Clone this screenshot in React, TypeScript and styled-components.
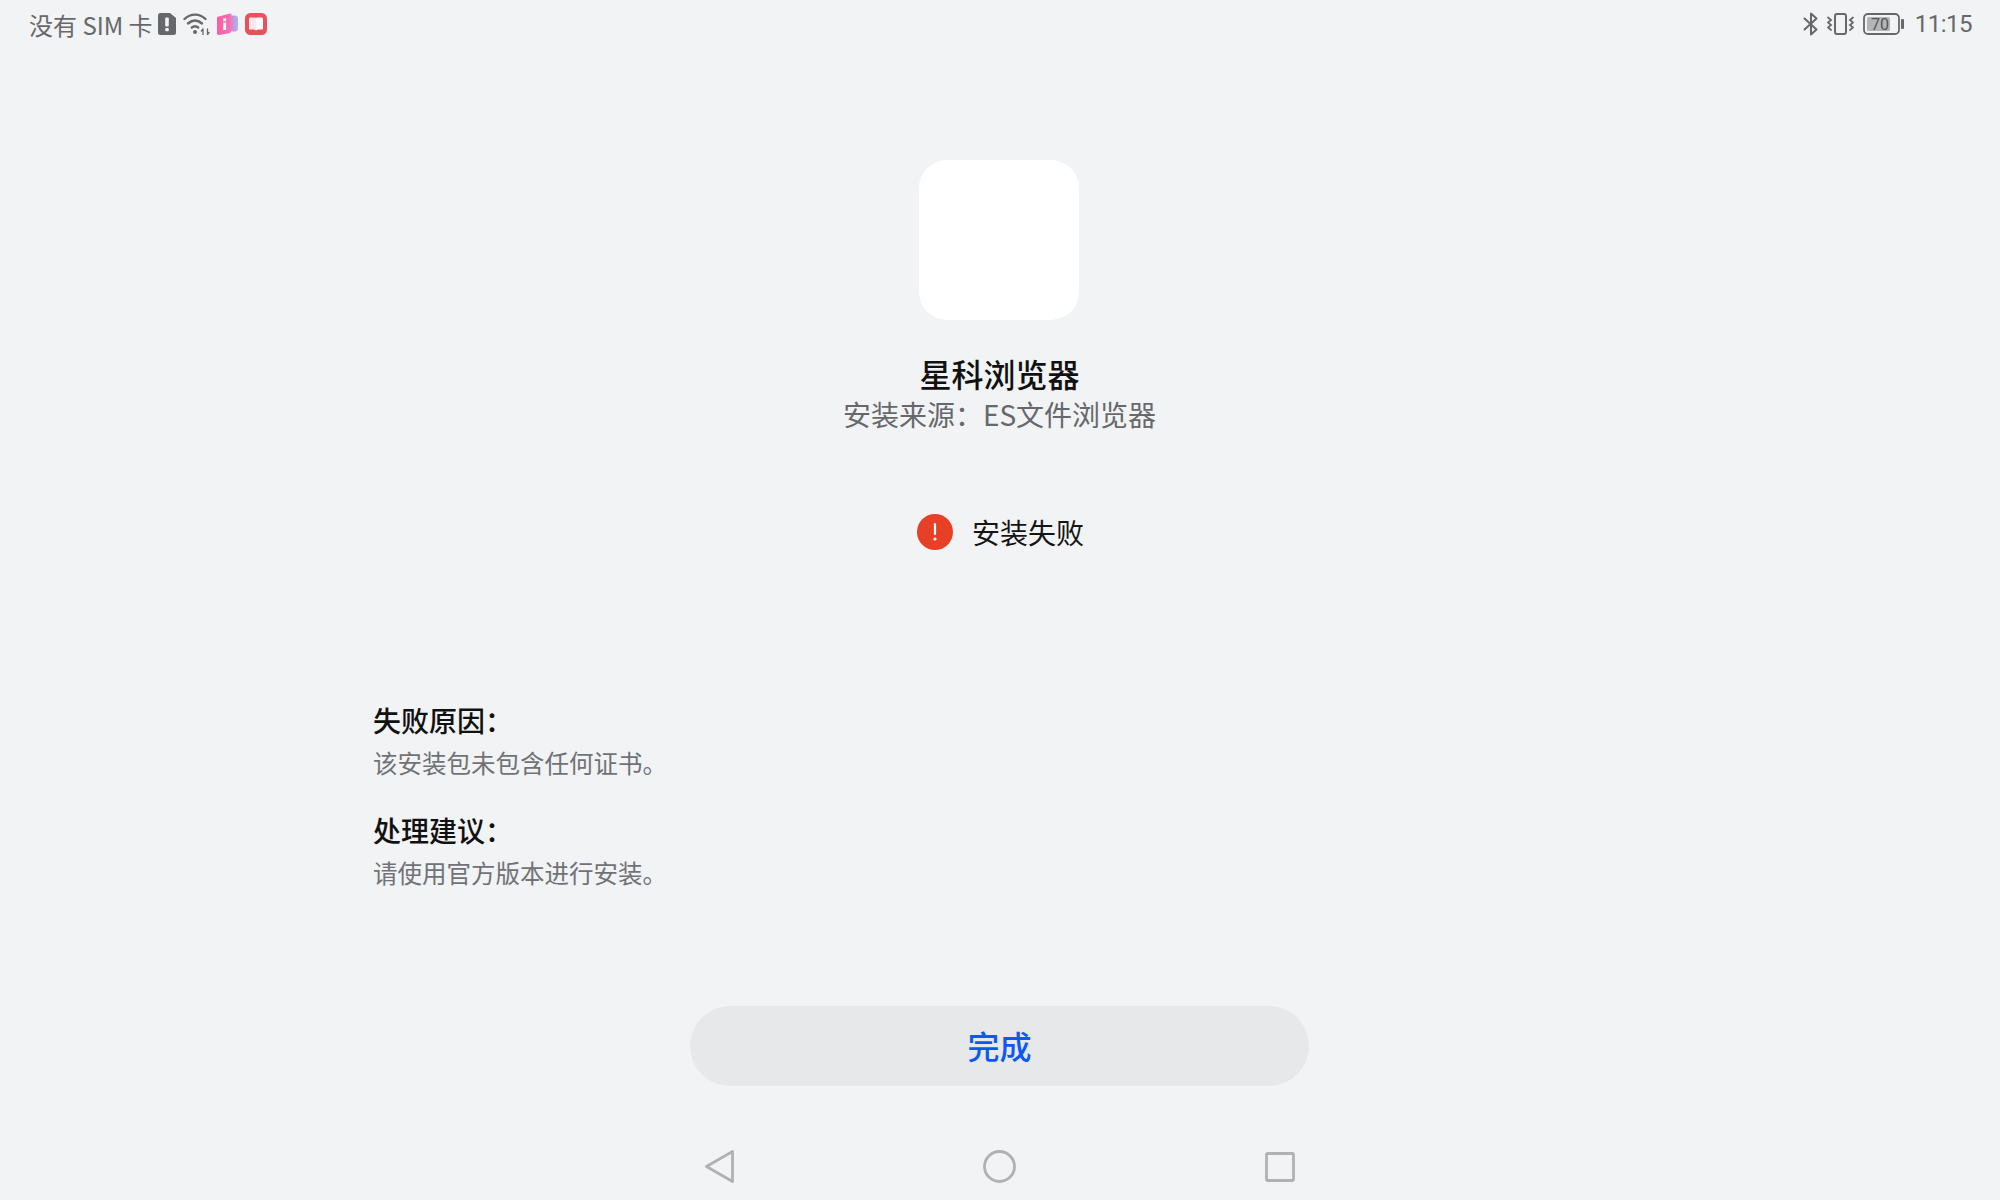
import React from 'react';
import styled, { createGlobalStyle } from 'styled-components';

const GlobalStyle = createGlobalStyle`
  html, body {
    margin: 0;
    padding: 0;
    background: #f1f3f5;
  }
  * {
    box-sizing: border-box;
  }
`;

const Screen = styled.div`
  width: 2000px;
  height: 1200px;
  padding-right: 1px;
  display: flex;
  flex-direction: column;
  align-items: center;
  background: #f1f3f5;
  font-family: "Noto Sans CJK SC", "Noto Sans", sans-serif;
  overflow: hidden;
`;

const StatusBar = styled.div`
  width: 100%;
  height: 48px;
  padding: 0 27px 0 29px;
  display: flex;
  align-items: center;
  justify-content: space-between;
  color: #66686b;
  font-size: 24px;
`;

const StatusGroup = styled.div`
  display: flex;
  align-items: center;
  gap: ${(p: { $gap: number }) => p.$gap}px;
`;

const CarrierText = styled.span`
  margin-right: -2px;
  font-family: "Noto Sans CJK SC", sans-serif;
  white-space: pre;
`;

const Clock = styled.span`
  margin-left: 2px;
  font-family: Roboto, sans-serif;
  font-size: 24px;
  letter-spacing: -0.5px;
`;

const AppIcon = styled.div`
  width: 160px;
  height: 160px;
  margin: 112px 1px 0 0;
  border-radius: 28px;
  background: #ffffff;
`;

const AppName = styled.div`
  margin-top: 31px;
  height: 44px;
  line-height: 44px;
  font-size: 32px;
  font-weight: 500;
  color: #111111;
`;

const Source = styled.div`
  height: 38px;
  line-height: 38px;
  font-size: 28px;
  color: #66686b;
`;

const Result = styled.div`
  margin: 79px 0 0 2px;
  display: flex;
  align-items: center;
  gap: 19px;
  height: 40px;
  font-size: 28px;
  color: #151515;
`;

const Details = styled.div`
  width: 100%;
  padding-left: 373px;
  margin-top: 148px;
  display: flex;
  flex-direction: column;
  gap: 27px;
`;

const DetailBlock = styled.div`
  display: flex;
  flex-direction: column;
  gap: 3px;
`;

const DetailTitle = styled.div`
  height: 40px;
  line-height: 40px;
  font-size: 28px;
  font-weight: 500;
  color: #111111;
`;

const DetailText = styled.div`
  height: 40px;
  line-height: 40px;
  font-size: 24.5px;
  color: #707275;
`;

const DoneButton = styled.button`
  width: 619px;
  height: 80px;
  margin-top: 113px;
  padding: 0 0 2px;
  border: none;
  border-radius: 40px;
  background: #e7e8ea;
  color: #0a59f7;
  font-family: inherit;
  font-size: 32px;
  font-weight: 500;
`;

const NavBar = styled.div`
  width: 590px;
  margin: 64px 0 0 1px;
  display: flex;
  align-items: center;
  justify-content: space-between;
`;

const SimAlert = () => (
  <svg width="18" height="22" viewBox="0 0 18 22">
    <path d="M2.500 0H12l6 5v14.500a2.500 2.500 0 0 1-2.500 2.500h-13A2.500 2.500 0 0 1 0 19.500v-17A2.500 2.500 0 0 1 2.500 0z" fill="#66686b" />
    <rect x="7.200" y="4.500" width="3.600" height="9" rx="1" fill="#f1f3f5" />
    <rect x="7.200" y="15" width="3.600" height="3.200" rx="1" fill="#f1f3f5" />
  </svg>
);

const Wifi = () => (
  <svg width="27" height="22" viewBox="0 0 27 22" fill="none" stroke="#66686b" strokeWidth="2.400" strokeLinecap="round">
    <path d="M1.500 6C7.500 .2 16.500 .2 22.500 6" />
    <path d="M5 10.500c4.500-4 9.500-4 14 0" />
    <path d="M8.800 14.500c2-1.600 4.400-1.600 6.400 0" />
    <circle cx="12" cy="19" r="2" fill="#66686b" stroke="none" />
    <path d="M20 21.500V16M20 16l-1.600 2M24.500 16v5.500M24.500 21.500l1.600-2" strokeWidth="1.300" />
  </svg>
);

const InfoApp = () => (
  <svg width="21" height="22" viewBox="0 0 21 22">
    <defs>
      <linearGradient id="infoGrad" x1="0" x2="1" y1="0" y2="0">
        <stop offset="0" stopColor="#fb5f9f" />
        <stop offset="0.55" stopColor="#f56cb2" />
        <stop offset="1" stopColor="#a7b8fb" />
      </linearGradient>
    </defs>
    <path d="M0 4l13-3.500c1-.2 1.500 0 1.500 1V2.500h3.500c1.800 0 3 1 3 2.500v11c0 1.500-1.200 2.500-3 2.500h-3.800c-.5 1-1 1.500-2 1.800L2 22c-1 0-2-.5-2-2z" fill="url(#infoGrad)" />
    <rect x="6.300" y="5.500" width="2.800" height="2.600" fill="#ffffff" />
    <rect x="6.300" y="9.500" width="2.800" height="7.500" fill="#ffffff" />
  </svg>
);

const BookApp = () => (
  <svg width="22" height="22" viewBox="0 0 22 22">
    <rect width="22" height="22" rx="5.500" fill="#e8505b" />
    <path d="M4 6c0-1 .6-1.600 1.500-1.600H10c.6 0 1 .3 1 .8v12.300c-.8-.6-1.500-.9-2.500-.9H5c-.6 0-1-.4-1-1z" fill="#fbe9ea" />
    <path d="M18 6c0-1-.6-1.600-1.500-1.600H12c-.6 0-1 .3-1 .8v12.300c.8-.6 1.500-.9 2.500-.9H17c.6 0 1-.4 1-1z" fill="#ffffff" />
  </svg>
);

const Bluetooth = () => (
  <svg width="15" height="24" viewBox="0 0 15 24" fill="none" stroke="#66686b" strokeWidth="2" strokeLinejoin="round" strokeLinecap="round">
    <path d="M1.500 6.500L13.500 17.500l-5.500 5V1.500L13.500 6.500 1.500 17.500" />
  </svg>
);

const Vibrate = () => (
  <svg width="27" height="22" viewBox="0 0 27 22" fill="none" stroke="#66686b" strokeWidth="2" strokeLinecap="round">
    <rect x="8" y="1" width="11" height="20" rx="2" />
    <path d="M1 4.500l3 2.500-3 2.500 3 2.500-3 2.500 3 2.500" strokeWidth="1.800" />
    <path d="M26 4.500l-3 2.500 3 2.500-3 2.500 3 2.500-3 2.500" strokeWidth="1.800" />
  </svg>
);

const Battery = () => (
  <svg width="41" height="22" viewBox="0 0 41 22">
    <rect x="1" y="1" width="35" height="20" rx="4" fill="none" stroke="#66686b" strokeWidth="1.800" />
    <rect x="4" y="4" width="23" height="14" rx="1.500" fill="#b4b5b7" />
    <rect x="38" y="6" width="3" height="10" rx="1" fill="#66686b" />
    <text x="17" y="17" textAnchor="middle" fontFamily="Roboto, sans-serif" fontSize="16" fill="#55575a">70</text>
  </svg>
);

const AlertBadge = () => (
  <svg width="36" height="36" viewBox="0 0 36 36">
    <circle cx="18" cy="18" r="18" fill="#e84026" />
    <rect x="16.900" y="9" width="2.200" height="12" rx="1.100" fill="#ffffff" />
    <circle cx="18" cy="25" r="1.600" fill="#ffffff" />
  </svg>
);

const BackIcon = () => (
  <svg width="29" height="33" viewBox="0 0 29 33" fill="none" stroke="#b0b1b3" strokeWidth="2.800" strokeLinejoin="round">
    <path d="M27.500 1.500v30L1.500 16.500z" />
  </svg>
);

const HomeIcon = () => (
  <svg width="33" height="33" viewBox="0 0 33 33" fill="none" stroke="#b0b1b3" strokeWidth="2.800">
    <circle cx="16.500" cy="16.500" r="15" />
  </svg>
);

const RecentIcon = () => (
  <svg width="30" height="30" viewBox="0 0 30 30" fill="none" stroke="#b0b1b3" strokeWidth="2.800" strokeLinejoin="round">
    <rect x="1.500" y="1.500" width="27" height="27" rx="1" />
  </svg>
);

const App = () => (
  <Screen>
    <GlobalStyle />
    <StatusBar>
      <StatusGroup $gap={7}>
        <CarrierText>没有 SIM 卡</CarrierText>
        <SimAlert />
        <Wifi />
        <InfoApp />
        <BookApp />
      </StatusGroup>
      <StatusGroup $gap={9}>
        <Bluetooth />
        <Vibrate />
        <Battery />
        <Clock>11:15</Clock>
      </StatusGroup>
    </StatusBar>
    <AppIcon />
    <AppName>星科浏览器</AppName>
    <Source>安装来源：ES文件浏览器</Source>
    <Result>
      <AlertBadge />
      <span>安装失败</span>
    </Result>
    <Details>
      <DetailBlock>
        <DetailTitle>失败原因：</DetailTitle>
        <DetailText>该安装包未包含任何证书。</DetailText>
      </DetailBlock>
      <DetailBlock>
        <DetailTitle>处理建议：</DetailTitle>
        <DetailText>请使用官方版本进行安装。</DetailText>
      </DetailBlock>
    </Details>
    <DoneButton>完成</DoneButton>
    <NavBar>
      <BackIcon />
      <HomeIcon />
      <RecentIcon />
    </NavBar>
  </Screen>
);

export default App;
